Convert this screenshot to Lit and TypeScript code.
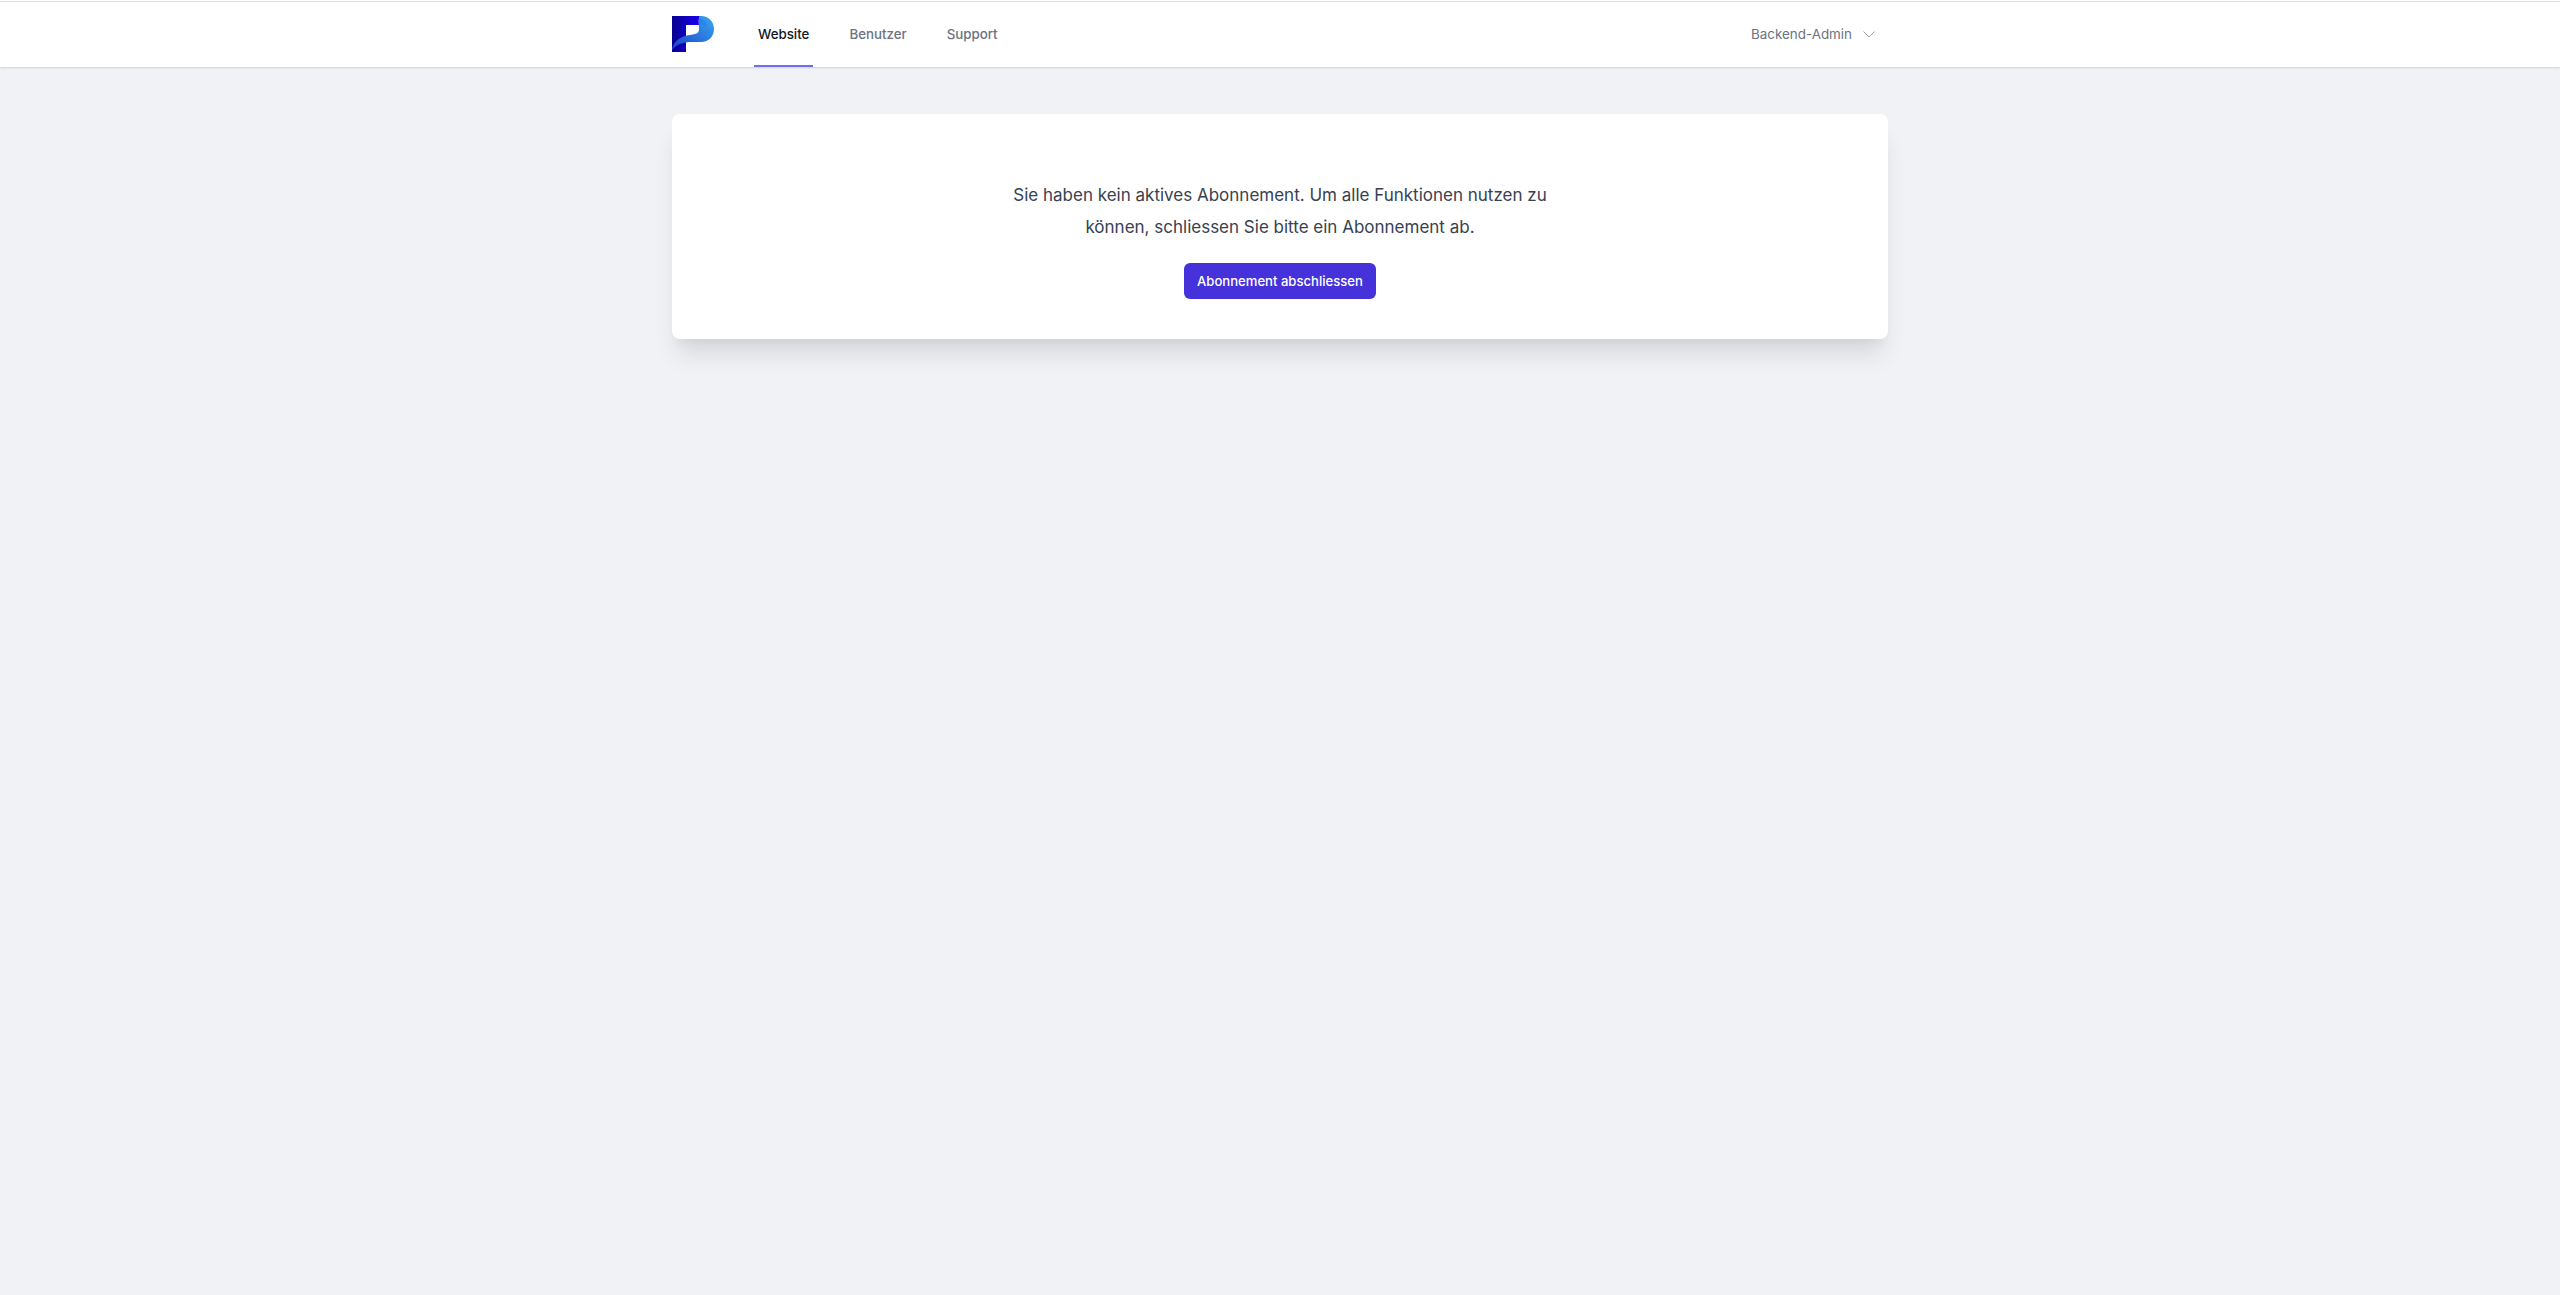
import { LitElement, html, css } from "lit";
import { customElement } from "lit/decorators.js";

@customElement("app-root")
export class AppRoot extends LitElement {
  static styles = css`
    :host { display: block; min-height: 1295px; background: #f0f2f5; font-family: "Inter", "Liberation Sans", sans-serif; }
    nav { background: #fff; border-top: 1px solid #fff; padding-top: 1px; box-shadow: inset 0 1px 0 #e2e3e6, 0 1px 2px rgba(0,0,0,.14); height: 65px; }
    .wrap { width: 1216px; margin: 0 auto; display: flex; align-items: stretch; height: 100%; }
    .logo { width: 42px; height: 36px; margin-top: 14px; flex: none; }
    .links { display: flex; margin-left: 40px; gap: 32px; }
    .links a { display: flex; align-items: center; padding: 0 4px; font-size: 13.3px; font-weight: 500; color: #6b7280; border-bottom: 2px solid transparent; box-sizing: border-box; }
    .links a.on { color: #111827; border-bottom-color: #6d6ff0; }
    .user { margin-left: auto; display: flex; align-items: center; gap: 10px; padding-right: 12px; padding-bottom: 2px; font-size: 13.4px; color: #6b7280; }
    .user svg { width: 14px; height: 14px; margin-top: 1px; }
    main { width: 1216px; margin: 47px auto 0; background: #fff; border-radius: 8px; height: 225px; box-sizing: border-box; box-shadow: 0 20px 25px -5px rgba(0,0,0,.1), 0 10px 10px -5px rgba(0,0,0,.04); display: flex; flex-direction: column; align-items: center; padding-top: 65px; }
    p { margin: 0; width: 600px; text-align: center; font-size: 17px; line-height: 32px; color: #374151; font-weight: 400; }
    button { margin-top: 20px; height: 36px; width: 192px; border: 0; border-radius: 6px; background: #4632db; color: #fff; font: 500 13.1px "Inter", "Liberation Sans", sans-serif; }
  `;
  render() {
    return html`
      <nav><div class="wrap">
        <svg class="logo" viewBox="0 0 42 36">
          <defs>
            <linearGradient id="a" x1="0" x2="1" y1="0" y2="0"><stop offset="0" stop-color="#0a0090"/><stop offset="1" stop-color="#1a00f0"/></linearGradient>
            <linearGradient id="b" x1="0" x2="1" y1="1" y2="0"><stop offset="0" stop-color="#1a3fc8"/><stop offset="1" stop-color="#38a8f0"/></linearGradient>
          </defs>
          <path fill="url(#a)" d="M0 0H28C26 3 27 6 27 9H14V36H0Z"/>
          <path fill="url(#b)" d="M0 33C2 24 10 20 18 19C23 18 27 18 27 13C27 8 26 3 28 0H29C37 0 42 6 42 13C42 20 37 26 29 26H20C11 26 5 28 0 34Z"/>
          <path fill="#2f7fe8" opacity=".8" d="M27 2C32 3 35 7 35 12C33 9 30 8 27 9Z"/>
        </svg>
        <div class="links"><a class="on">Website</a><a>Benutzer</a><a>Support</a></div>
        <div class="user">Backend-Admin
          <svg viewBox="0 0 14 14" fill="none" stroke="#9ca3af" stroke-width="1"><path d="M1.5 4.5 7 10 12.5 4.5"/></svg>
        </div>
      </div></nav>
      <main>
        <p>Sie haben kein aktives Abonnement. Um alle Funktionen nutzen zu können, schliessen Sie bitte ein Abonnement ab.</p>
        <button>Abonnement abschliessen</button>
      </main>`;
  }
}
